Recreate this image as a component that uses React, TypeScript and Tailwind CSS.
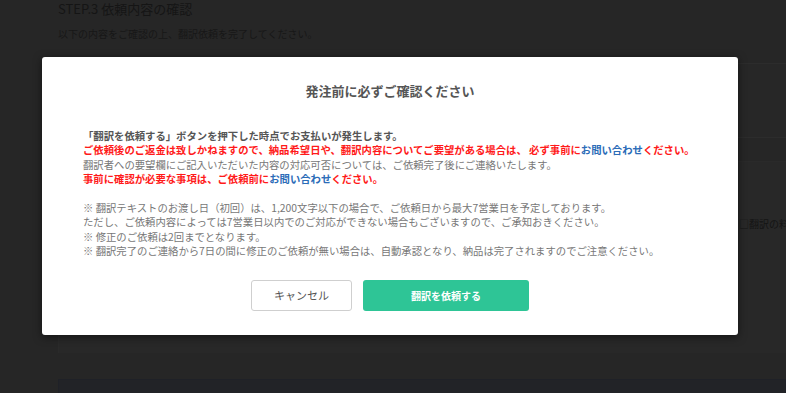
import React from 'react';

const jp = "font-['Noto_Sans_CJK_JP','Noto_Sans',sans-serif]";

export default function App() {
  return (
    <div className={`relative w-[786px] h-[393px] overflow-hidden bg-[#262626] ${jp}`}>
      {/* page behind overlay */}
      <div className="pl-[58px] pt-[1px]">
        <h1 className="text-[13px] leading-[16px] text-[#151515]">STEP.3 依頼内容の確認</h1>
        <p className="mt-[10px] text-[10px] leading-[14px] text-[#171717]">以下の内容をご確認の上、翻訳依頼を完了してください。</p>
        <div className="mt-[22px] h-[75px] border-y border-[#2c2c2c] bg-[#272727]" />
        <div className="mt-[23px] h-[192px] border-l border-t border-[#2a2a2a] bg-[#282828] pt-[47px] pl-[680px] whitespace-nowrap overflow-hidden">
          <span className="text-[10px] leading-[14px] text-[#141414]">□翻訳の料金</span>
        </div>
        <div className="mt-[26px] h-[40px] border border-[#1f2127] bg-[#222327]" />
      </div>

      {/* modal */}
      <div className="absolute left-[42px] top-[57px] w-[696px] h-[278px] rounded-[3px] bg-white shadow-[0_2px_8px_rgba(0,0,0,0.5)] flex flex-col items-center pt-[26px]">
        <h2 className="text-[13px] leading-[16px] font-bold text-[#555]">発注前に必ずご確認ください</h2>
        <div className="mt-[30px] self-stretch px-[41px] text-[10.35px] leading-[14.4px] text-[#777] whitespace-nowrap">
          <p className="font-bold text-[#555]">「翻訳を依頼する」ボタンを押下した時点でお支払いが発生します。</p>
          <p className="font-bold text-[#ff1a1a]">
            ご依頼後のご返金は致しかねますので、納品希望日や、翻訳内容についてご要望がある場合は、 必ず事前に<span className="text-[#2b6cb8]">お問い合わせ</span>ください。
          </p>
          <p>翻訳者への要望欄にご記入いただいた内容の対応可否については、ご依頼完了後にご連絡いたします。</p>
          <p className="font-bold text-[#ff1a1a]">
            事前に確認が必要な事項は、ご依頼前に<span className="text-[#2b6cb8]">お問い合わせ</span>ください。
          </p>
          <p>&nbsp;</p>
          <p>※ 翻訳テキストのお渡し日（初回）は、1,200文字以下の場合で、ご依頼日から最大7営業日を予定しております。</p>
          <p>ただし、ご依頼内容によっては7営業日以内でのご対応ができない場合もございますので、ご承知おきください。</p>
          <p>※ 修正のご依頼は2回までとなります。</p>
          <p>※ 翻訳完了のご連絡から7日の間に修正のご依頼が無い場合は、自動承認となり、納品は完了されますのでご注意ください。</p>
        </div>
        <div className="mt-[21px] flex gap-[11px]">
          <button className="w-[101px] h-[31px] rounded-[3px] border border-[#cfcfcf] bg-white text-[11px] text-[#555]">キャンセル</button>
          <button className="w-[166px] h-[31px] rounded-[3px] bg-[#2ec596] text-[10px] font-bold text-white">翻訳を依頼する</button>
        </div>
      </div>
    </div>
  );
}
